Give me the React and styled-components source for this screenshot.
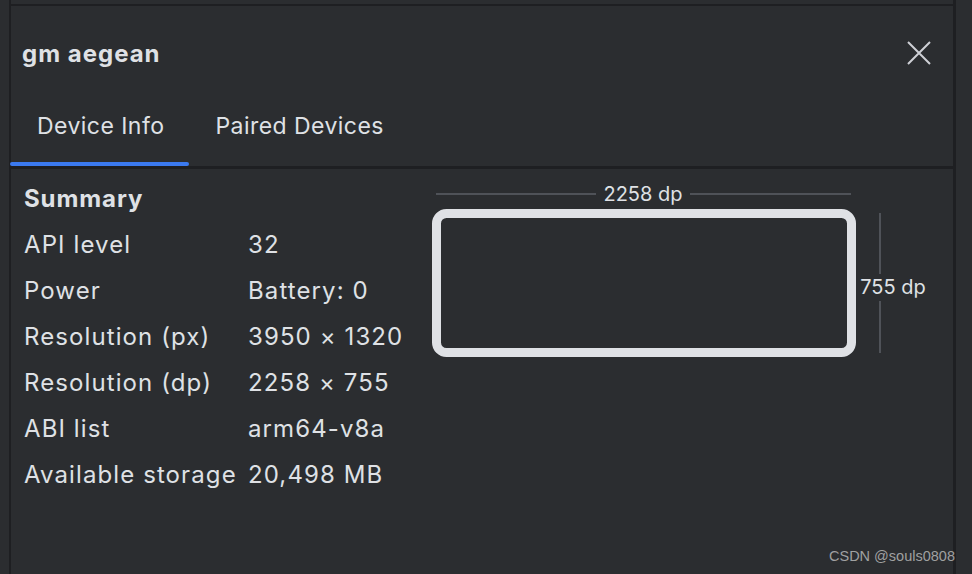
import { Fragment } from 'react';
import styled, { createGlobalStyle } from 'styled-components';

const GlobalStyle = createGlobalStyle`
  html, body { margin:0; padding:0; background:#2b2d30; }
  body { font-family: Inter, "Noto Sans", sans-serif; color:#dfe1e5; }
`;

const Page = styled.div`
  display:flex;
  width:972px; height:574px;
  background:#2b2d30;
  position:relative;
  overflow:hidden;
`;

const Gutter = styled.div`
  width:${p => p.$w}px;
  flex:none;
`;

const VLine = styled.div`
  width:${p => p.$w}px;
  flex:none;
  background:#1e1f22;
`;

const Panel = styled.div`
  flex:1;
  display:flex;
  flex-direction:column;
`;

const HLine = styled.div`
  height:${p => p.$h}px;
  flex:none;
  background:#1e1f22;
`;

const TopStrip = styled.div`
  height:4px;
`;

const Header = styled.div`
  height:94px;
  display:flex;
  align-items:center;
  justify-content:space-between;
  padding:0 22px 0 11px;
`;

const Title = styled.h1`
  margin:0;
  font-size:24px;
  font-weight:700;
  letter-spacing:1px;
  color:#dfe1e5;
`;

const CloseBtn = styled.button`
  width:24px; height:24px;
  padding:0; border:0; background:none;
  display:flex;
`;

const Tabs = styled.div`
  display:flex;
  height:66px;
`;

const Tab = styled.div`
  position:relative;
  padding:12px 25px 0 26px;
  font-size:23px;
  letter-spacing:0.45px;
  line-height:28px;
  color:#dfe1e5;
  ${p => p.$active && `
    &::after{
      content:'';
      position:absolute; left:-1px; right:0; bottom:0;
      height:4px; border-radius:2px;
      background:#3b7af0;
    }
  `}
`;

const Content = styled.div`
  display:flex;
  padding:6px 0 0 13px;
`;

const Table = styled.div`
  display:grid;
  grid-template-columns:224px 178px;
  grid-auto-rows:46px;
  align-items:center;
  font-size:24px;
  letter-spacing:1.1px;
`;

const Heading = styled.div`
  grid-column:1 / span 2;
  font-weight:700;
  letter-spacing:0.9px;
`;

const Cell = styled.div`
  white-space:nowrap;
`;

const Preview = styled.svg`
  flex:none;
  margin-top:5px;
  text { font-family: Inter, "Noto Sans", sans-serif; fill:#dfe1e5; font-size:20px; }
`;

const Watermark = styled.div`
  position:absolute;
  left:829px; top:548px;
  font-family:"Liberation Sans", Arial, sans-serif;
  font-size:14.5px;
  color:rgba(200,200,200,0.75);
`;

const rows = [
  ['API level', '32'],
  ['Power', 'Battery: 0'],
  ['Resolution (px)', '3950 × 1320'],
  ['Resolution (dp)', '2258 × 755'],
  ['ABI list', 'arm64-v8a'],
  ['Available storage', '20,498 MB'],
];

export default function App() {
  return (
    <Page>
      <GlobalStyle />
      <Gutter $w={9} />
      <VLine $w={2} />
      <Panel>
        <TopStrip />
        <HLine $h={2} />
        <Header>
          <Title>gm aegean</Title>
          <CloseBtn aria-label="Close">
            <svg width="24" height="24" viewBox="0 0 24 24">
              <path d="M1 1 L23 23 M23 1 L1 23" stroke="#ced0d6" strokeWidth="2" fill="none" />
            </svg>
          </CloseBtn>
        </Header>
        <Tabs>
          <Tab $active>Device Info</Tab>
          <Tab>Paired Devices</Tab>
        </Tabs>
        <HLine $h={3} />
        <Content>
          <Table>
            <Heading>Summary</Heading>
            {rows.map(([k, v]) => (
              <Fragment key={k}>
                <Cell>{k}</Cell>
                <Cell>{v}</Cell>
              </Fragment>
            ))}
          </Table>
          {/* device outline with dp dimensions */}
          <Preview width="520" height="180" viewBox="0 0 520 180">
            <line x1="10" y1="14" x2="170" y2="14" stroke="#5c5f66" strokeWidth="1.5" />
            <line x1="264" y1="14" x2="425" y2="14" stroke="#5c5f66" strokeWidth="1.5" />
            <text x="217" y="21" textAnchor="middle">2258 dp</text>
            <rect x="10.5" y="33.5" width="415" height="139" rx="10" fill="none" stroke="#dfe1e5" strokeWidth="9" />
            <line x1="454" y1="33" x2="454" y2="94" stroke="#5c5f66" strokeWidth="1.5" />
            <line x1="454" y1="121" x2="454" y2="173" stroke="#5c5f66" strokeWidth="1.5" />
            <text x="467" y="114" textAnchor="middle">755 dp</text>
          </Preview>
        </Content>
      </Panel>
      <VLine $w={3} />
      <Gutter $w={16} />
      <Watermark>CSDN @souls0808</Watermark>
    </Page>
  );
}
